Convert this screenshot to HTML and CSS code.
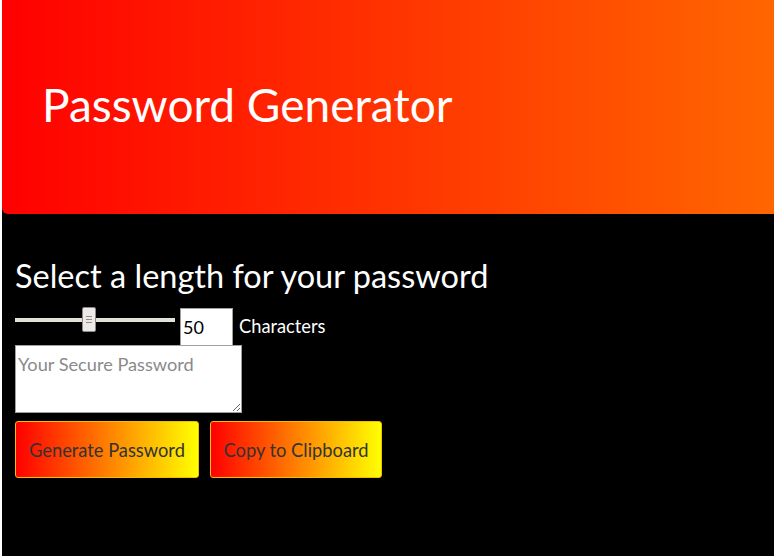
FILE: index.html
```html
<!DOCTYPE html>
<html lang="en">
<head>
<meta charset="utf-8">
<title>Password Generator</title>
<link rel="stylesheet" href="styles.css">
</head>
<body>
<header class="header">
  <h1 class="title">Password Generator</h1>
</header>
<main class="content">
  <h2 class="subtitle">Select a length for your password</h2>
  <div class="length-row">
    <input class="slider" type="range" min="8" max="100" value="50">
    <input class="length-input" type="number" value="50">
    <span class="length-label">Characters</span>
  </div>
  <textarea class="output" placeholder="Your Secure Password"></textarea>
  <div class="buttons">
    <button class="btn btn-generate">Generate Password</button>
    <button class="btn btn-copy">Copy to Clipboard</button>
  </div>
</main>
</body>
</html>
```

FILE: styles.css
```css
html {
  background: #ffffff;
}
body {
  margin: 0 0 0 2px;
  min-height: 556px;
  background: #000000;
  font-family: Lato, "Open Sans", sans-serif;
  overflow: hidden;
}
.header {
  height: 214px;
  box-sizing: border-box;
  padding: 77px 0 0 40px;
  background: linear-gradient(to right, #ff0000, #ff6600);
  border-bottom-left-radius: 6px;
}
.title {
  margin: 0;
  font-size: 46px;
  font-weight: 400;
  color: #ffffff;
  line-height: normal;
}
.content {
  padding: 42px 0 0 13px;
}
.subtitle {
  margin: 0;
  font-size: 32.5px;
  font-weight: 400;
  color: #ffffff;
  line-height: normal;
}
.length-row {
  display: flex;
  align-items: flex-start;
  margin-top: 12px;
}
.slider {
  -webkit-appearance: none;
  appearance: none;
  width: 160px;
  height: 25px;
  margin: 0;
  background: transparent;
}
.slider::-webkit-slider-runnable-track {
  height: 4px;
  background: #e4e0da;
  border-radius: 0;
}
.slider::-webkit-slider-thumb {
  -webkit-appearance: none;
  width: 14px;
  height: 25px;
  margin-top: -11px;
  box-sizing: border-box;
  border: 1px solid #8c8a88;
  border-radius: 2px;
  background: repeating-linear-gradient(to bottom, #8f8d8b 0 1px, transparent 1px 3px) center / 6px 7px no-repeat, #ece9e6;
}
.length-input {
  width: 53px;
  height: 38px;
  box-sizing: border-box;
  margin: 1px 0 0 5px;
  padding: 0 2px;
  border: 1px solid #a0a0a0;
  background: #ffffff;
  font-family: Lato, sans-serif;
  font-size: 18px;
  color: #000000;
  -moz-appearance: textfield;
}
.length-input::-webkit-inner-spin-button,
.length-input::-webkit-outer-spin-button {
  -webkit-appearance: none;
  margin: 0;
}
.length-label {
  margin: 8px 0 0 6px;
  font-size: 18.3px;
  line-height: normal;
  color: #ffffff;
}
.output {
  display: block;
  width: 227px;
  height: 68px;
  box-sizing: border-box;
  margin: -1px 0 0 0;
  padding: 7px 2px 2px;
  border: 1px solid #a0a0a0;
  background: #ffffff;
  font-family: Lato, sans-serif;
  font-size: 18.2px;
  line-height: normal;
  resize: both;
}
.output::placeholder {
  color: #8a8a8a;
}
.buttons {
  display: flex;
  gap: 11px;
  margin-top: 8px;
}
.btn {
  height: 57px;
  box-sizing: border-box;
  padding: 0 10px;
  border: 1px solid #f0c000;
  border-radius: 3px;
  background: linear-gradient(to right, #ff0000, #ffff00);
  font-family: Lato, sans-serif;
  font-size: 18.3px;
  color: #333333;
  white-space: nowrap;
}
.btn-generate {
  width: 184px;
}
.btn-copy {
  width: 172px;
}
```
